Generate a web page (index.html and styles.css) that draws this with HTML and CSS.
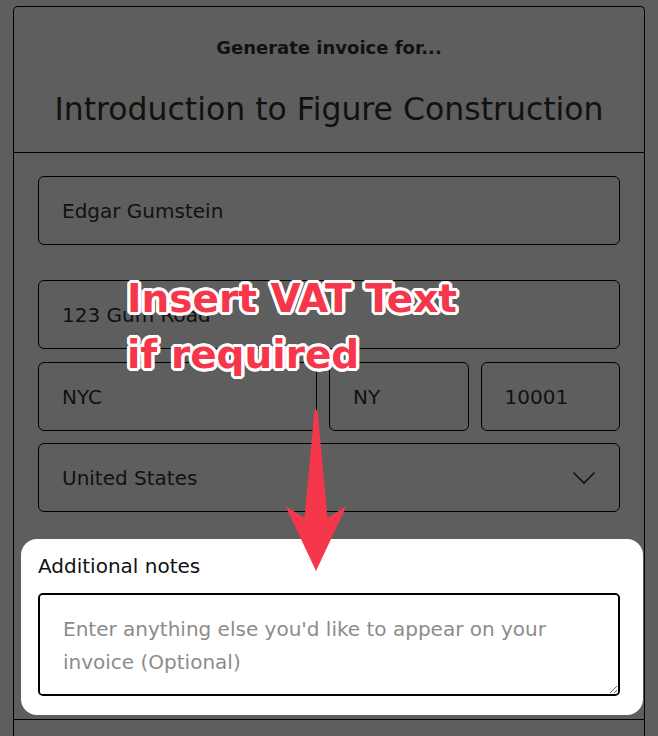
FILE: index.html
```html
<!DOCTYPE html>
<html lang="en">
<head>
<meta charset="utf-8">
<title>Generate invoice</title>
<link rel="stylesheet" href="styles.css">
</head>
<body>
  <div class="card">
    <header class="card-head">
      <p class="eyebrow">Generate invoice for...</p>
      <h1 class="title">Introduction to Figure Construction</h1>
    </header>
    <form class="card-body">
      <input class="field field-name" type="text" value="Edgar Gumstein">
      <input class="field field-addr" type="text" value="123 Gum Road">
      <div class="row">
        <input class="field" type="text" value="NYC">
        <input class="field" type="text" value="NY">
        <input class="field" type="text" value="10001">
      </div>
      <div class="field select">
        <span>United States</span>
        <svg class="chevron" width="24" height="14" viewBox="0 0 24 14"><path d="M1.5 1.5 L12 12 L22.5 1.5" fill="none" stroke="#111" stroke-width="1.6"/></svg>
      </div>
      <div class="notes">
        <label class="notes-label" for="notes">Additional notes</label>
        <textarea id="notes" class="notes-area" placeholder="Enter anything else you'd like to appear on your invoice (Optional)"></textarea>
      </div>
    </form>
    <div class="card-foot"></div>
  </div>

  <div class="annotation">Insert VAT Text<br>if required</div>
  <svg class="arrow" width="658" height="736" viewBox="0 0 658 736">
    <path d="M314.5 410 L317.5 410 L327.5 518 L346.5 506 L316 571 L285.5 506 L304.5 518 Z" fill="#f5364b"/>
  </svg>
</body>
</html>
```
FILE: styles.css
```css
* { box-sizing: border-box; }
html, body { margin: 0; }
body {
  background: #5e5e5e;
  font-family: "DejaVu Sans", "Noto Sans", sans-serif;
  color: #111;
  padding: 6px 13px 0;
  height: 736px;
  overflow: hidden;
  position: relative;
}
.card {
  border: 1px solid #000;
  border-bottom: none;
  border-radius: 5px 5px 0 0;
  height: 740px;
}
.card-head {
  padding: 29px 24px 25px;
  border-bottom: 1px solid #000;
  text-align: center;
}
.eyebrow {
  margin: 0;
  font-size: 18px;
  line-height: 24px;
  font-weight: 700;
}
.title {
  margin: 31px 0 0;
  font-size: 31.5px;
  line-height: 36px;
  font-weight: 400;
}
.card-body {
  padding: 23px 24px 4px;
  display: flex;
  flex-direction: column;
  border-bottom: 1px solid #000;
}
.field {
  font: inherit;
  font-size: 20px;
  color: #111;
  height: 69px;
  background: transparent;
  border: 1px solid #000;
  border-radius: 6px;
  padding: 0 23px;
  outline: none;
  width: 100%;
  margin: 0;
}
.field-addr { margin-top: 35px; }
.row {
  margin-top: 13px;
  display: grid;
  grid-template-columns: 2fr 1fr 1fr;
  gap: 12px;
}
.select {
  margin-top: 12px;
  display: flex;
  align-items: center;
  justify-content: space-between;
  padding-right: 23px;
}
.chevron { display: block; }
.notes {
  margin: 27px -23px 0 -17px;
  padding: 15px 23px 19px 17px;
  background: #fff;
  border-radius: 16px;
  display: flex;
  flex-direction: column;
  gap: 15px;
}
.notes-label {
  font-size: 20px;
  line-height: 24px;
  color: #111;
}
.notes-area {
  font: inherit;
  font-size: 20px;
  line-height: 33px;
  color: #111;
  height: 103px;
  border: 2px solid #000;
  border-radius: 5px;
  padding: 18px 23px;
  background: #fff;
  resize: vertical;
  outline: none;
}
.notes-area::placeholder { color: #8c8c8c; }
.annotation {
  position: absolute;
  left: 127px;
  top: 271px;
  font-family: "DejaVu Sans", sans-serif;
  font-weight: 700;
  font-size: 39px;
  line-height: 56px;
  color: #f5364b;
  text-shadow:
    3px 0 0 #fff, -3px 0 0 #fff, 0 3px 0 #fff, 0 -3px 0 #fff,
    2px 2px 0 #fff, -2px 2px 0 #fff, 2px -2px 0 #fff, -2px -2px 0 #fff,
    3px 1px 0 #fff, -3px 1px 0 #fff, 3px -1px 0 #fff, -3px -1px 0 #fff,
    1px 3px 0 #fff, -1px 3px 0 #fff, 1px -3px 0 #fff, -1px -3px 0 #fff;
}
.arrow {
  position: absolute;
  left: 0;
  top: 0;
  pointer-events: none;
}
```
